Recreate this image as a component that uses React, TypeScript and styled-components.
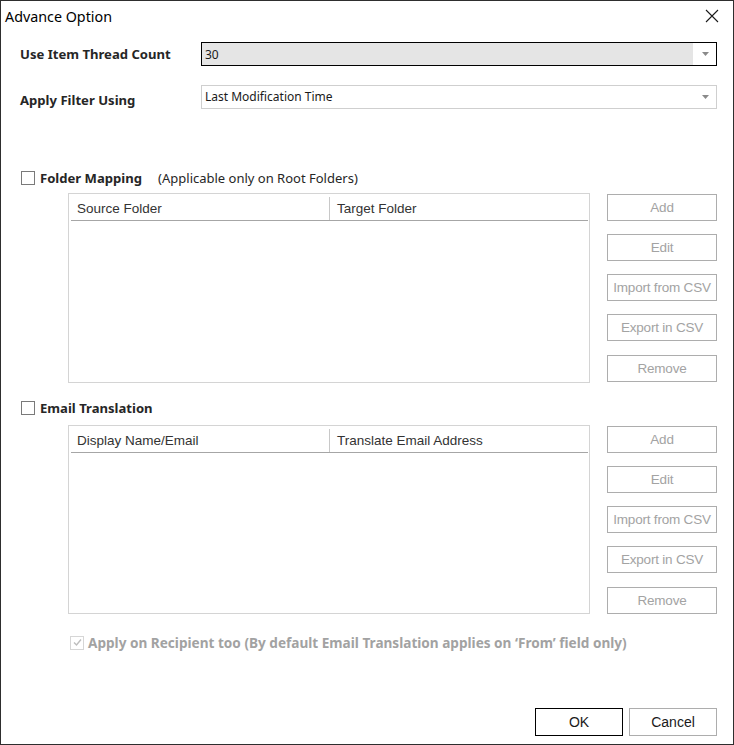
import styled, { createGlobalStyle } from "styled-components";

const GlobalStyle = createGlobalStyle`
  html, body {
    margin: 0;
    padding: 0;
    background: #ffffff;
  }
  * {
    box-sizing: border-box;
  }
`;

const mappingColumns = ["Source Folder", "Target Folder"];
const translationColumns = ["Display Name/Email", "Translate Email Address"];
const actions = ["Add", "Edit", "Import from CSV", "Export in CSV", "Remove"];

const Arrow = () => (
  <svg width="7" height="4" viewBox="0 0 7 4">
    <path d="M0 0 L7 0 L3.5 4 Z" fill="#8a8a8a" />
  </svg>
);

const CloseIcon = () => (
  <svg width="14" height="14" viewBox="0 0 14 14">
    <path d="M1 1 L13 13 M13 1 L1 13" stroke="#1a1a1a" strokeWidth="1.1" />
  </svg>
);

const CheckMark = () => (
  <svg width="11" height="11" viewBox="0 0 11 11">
    <path d="M2 5.5 L4.5 8 L9 2.5" stroke="#bdbdbd" strokeWidth="1.4" fill="none" />
  </svg>
);

const GridSection = ({
  columns,
  top,
  height,
}: {
  columns: string[];
  top: number;
  height: number;
}) => (
  <Section $top={top} $height={height}>
    <Table>
      <TableHead>
        {columns.map((c) => (
          <HeadCell key={c}>{c}</HeadCell>
        ))}
      </TableHead>
    </Table>
    <ActionColumn>
      {actions.map((a, i) => (
        <ActionButton key={a} $last={i === actions.length - 1} disabled>
          {a}
        </ActionButton>
      ))}
    </ActionColumn>
  </Section>
);

const App = () => {
  return (
    <>
      <GlobalStyle />
      <Window>
        <TitleBar>
          <Title>Advance Option</Title>
          <CloseButton>
            <CloseIcon />
          </CloseButton>
        </TitleBar>
        <Body>
          <FieldRow>
            <Label>Use Item Thread Count</Label>
            <Combo $focused>
              <ComboText $focused>30</ComboText>
              <ComboArrow>
                <Arrow />
              </ComboArrow>
            </Combo>
          </FieldRow>
          <FieldRow $second>
            <Label $low>Apply Filter Using</Label>
            <Combo>
              <ComboText>Last Modification Time</ComboText>
              <ComboArrow>
                <Arrow />
              </ComboArrow>
            </Combo>
          </FieldRow>

          <CheckRow $top={62}>
            <CheckBox />
            <Label>Folder Mapping</Label>
            <Note>(Applicable only on Root Folders)</Note>
          </CheckRow>
          <GridSection columns={mappingColumns} top={8} height={190} />

          <CheckRow $top={18}>
            <CheckBox />
            <Label>Email Translation</Label>
          </CheckRow>
          <GridSection columns={translationColumns} top={10} height={189} />

          <RecipientRow>
            <CheckBox $disabled>
              <CheckMark />
            </CheckBox>
            <DisabledLabel>
              Apply on Recipient too (By default Email Translation applies on ‘From’ field only)
            </DisabledLabel>
          </RecipientRow>
        </Body>
        <Footer>
          <DialogButton $primary>OK</DialogButton>
          <DialogButton>Cancel</DialogButton>
        </Footer>
      </Window>
    </>
  );
};

export default App;

const Window = styled.div`
  width: 734px;
  height: 745px;
  border: 1px solid #2e2e2e;
  background: #ffffff;
  display: flex;
  flex-direction: column;
  font-family: "Noto Sans", "Open Sans", sans-serif;
  color: #1e1e1e;
`;

const TitleBar = styled.div`
  height: 33px;
  padding: 0 14px 2px 4px;
  display: flex;
  align-items: center;
  justify-content: space-between;
`;

const Title = styled.div`
  font-size: 14.3px;
  color: #000;
`;

const CloseButton = styled.div`
  display: flex;
  align-items: center;
  justify-content: center;
  width: 14px;
  height: 14px;
  margin-bottom: 2px;
`;

const Body = styled.div`
  flex: 1;
  padding: 8px 16px 0 19px;
  display: flex;
  flex-direction: column;
`;

const FieldRow = styled.div<{ $second?: boolean }>`
  display: grid;
  grid-template-columns: 181px 1fr;
  align-items: center;
  margin-top: ${(p) => (p.$second ? "18px" : "0")};
`;

const Label = styled.span<{ $low?: boolean }>`
  font-size: 13.1px;
  font-weight: 700;
  color: #262626;
  padding-top: ${(p) => (p.$low ? "7px" : "0")};
`;

const Combo = styled.div<{ $focused?: boolean }>`
  height: 24px;
  display: flex;
  border: 1px solid ${(p) => (p.$focused ? "#000" : "#cfcfcf")};
  background: #ffffff;
`;

const ComboText = styled.div<{ $focused?: boolean }>`
  flex: 1;
  display: flex;
  align-items: center;
  padding-left: 3px;
  font-size: 12px;
  color: #1a1a1a;
  background: ${(p) => (p.$focused ? "#e5e5e5" : "#ffffff")};
`;

const ComboArrow = styled.div`
  width: 23px;
  display: flex;
  align-items: center;
  justify-content: center;
  padding-left: 2px;
`;

const CheckRow = styled.div<{ $top: number }>`
  display: flex;
  align-items: center;
  gap: 5px;
  margin-top: ${(p) => p.$top}px;
  padding-left: 1px;
  height: 14px;
`;

const CheckBox = styled.div<{ $disabled?: boolean }>`
  width: 14px;
  height: 14px;
  border: 1px solid ${(p) => (p.$disabled ? "#d6d6d6" : "#7a7a7a")};
  display: flex;
  align-items: center;
  justify-content: center;
  flex-shrink: 0;
`;

const Note = styled.span`
  font-size: 13px;
  color: #262626;
  margin-left: 11px;
`;

const Section = styled.div<{ $top: number; $height: number }>`
  display: flex;
  gap: 17px;
  margin-top: ${(p) => p.$top}px;
  padding-left: 48px;
  height: ${(p) => p.$height}px;
`;

const Table = styled.div`
  flex: 1;
  border: 1px solid #d4d4d4;
  padding: 1px 1px 0 2px;
`;

const TableHead = styled.div`
  display: grid;
  grid-template-columns: 258px 1fr;
  height: 26px;
  padding-top: 2px;
  border-bottom: 1px solid #a6a6a6;
`;

const HeadCell = styled.div`
  display: flex;
  align-items: center;
  padding-left: 6px;
  font-family: "Liberation Sans", Arial, sans-serif;
  font-size: 13.5px;
  color: #333;
  & + & {
    border-left: 1px solid #c8c8c8;
    padding-left: 7px;
  }
`;

const ActionColumn = styled.div`
  width: 110px;
  display: flex;
  flex-direction: column;
  gap: 13px;
  padding-top: 1px;
`;

const ActionButton = styled.button<{ $last?: boolean }>`
  height: 27px;
  margin-top: ${(p) => (p.$last ? "1px" : "0")};
  border: 1px solid #adadad;
  background: #ffffff;
  color: #a3a3a3;
  font-family: "Liberation Sans", Arial, sans-serif;
  font-size: 13.5px;
  letter-spacing: -0.2px;
  padding: 0;
`;

const RecipientRow = styled.div`
  display: flex;
  align-items: center;
  gap: 4px;
  margin-top: 19px;
  padding-left: 50px;
`;

const DisabledLabel = styled.span`
  font-size: 13.6px;
  font-weight: 700;
  color: #a2a2a2;
`;

const Footer = styled.div`
  display: flex;
  justify-content: flex-end;
  gap: 6px;
  padding: 0 16px 8px 0;
`;

const DialogButton = styled.button<{ $primary?: boolean }>`
  width: 88px;
  height: 28px;
  border: 1px solid ${(p) => (p.$primary ? "#000" : "#adadad")};
  background: #ffffff;
  color: #1a1a1a;
  font-family: "Liberation Sans", Arial, sans-serif;
  font-size: 14px;
  padding: 0;
`;
